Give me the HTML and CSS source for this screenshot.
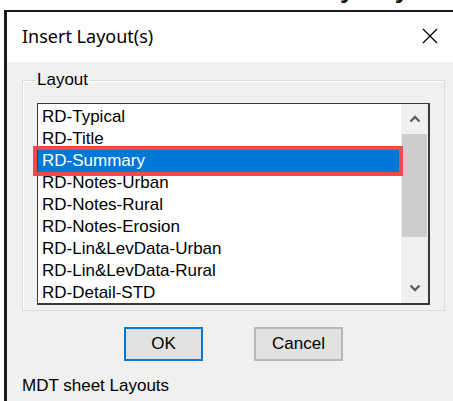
FILE: index.html
```html
<!DOCTYPE html>
<html lang="en">
<head>
<meta charset="utf-8">
<title>Insert Layout(s)</title>
<link rel="stylesheet" href="styles.css">
</head>
<body>
  <div class="backdrop"><span class="backdrop-text">by Day</span></div>

  <div class="dialog">
    <div class="titlebar">
      <span class="title">Insert Layout(s)</span>
      <svg class="close" width="16" height="16" viewBox="0 0 16 16" aria-hidden="true">
        <path d="M1 1 L15 15 M15 1 L1 15" stroke="#000" stroke-width="1.3" fill="none"/>
      </svg>
    </div>

    <div class="panel">
      <fieldset class="group">
        <legend class="group-label">Layout</legend>
        <div class="listwrap">
          <div class="listbox">
            <ul class="items">
              <li class="item">RD-Typical</li>
              <li class="item">RD-Title</li>
              <li class="item selected">RD-Summary</li>
              <li class="item">RD-Notes-Urban</li>
              <li class="item">RD-Notes-Rural</li>
              <li class="item">RD-Notes-Erosion</li>
              <li class="item">RD-Lin&amp;LevData-Urban</li>
              <li class="item">RD-Lin&amp;LevData-Rural</li>
              <li class="item">RD-Detail-STD</li>
            </ul>
            <div class="scrollbar">
              <div class="scroll-btn">
                <svg width="12" height="8" viewBox="0 0 12 8" aria-hidden="true">
                  <polyline points="1.5,6.5 6,2 10.5,6.5" stroke="#606060" stroke-width="2.4" fill="none"/>
                </svg>
              </div>
              <div class="scroll-thumb"></div>
              <div class="scroll-track"></div>
              <div class="scroll-btn">
                <svg width="12" height="8" viewBox="0 0 12 8" aria-hidden="true">
                  <polyline points="1.5,1.5 6,6 10.5,1.5" stroke="#606060" stroke-width="2.4" fill="none"/>
                </svg>
              </div>
            </div>
          </div>
          <div class="mark"></div>
        </div>
      </fieldset>

      <div class="actions">
        <button class="btn btn-default" type="button">OK</button>
        <button class="btn" type="button">Cancel</button>
      </div>

      <p class="status">MDT sheet Layouts</p>
    </div>
  </div>
</body>
</html>
```

FILE: styles.css
```css
html, body {
  margin: 0;
  padding: 0;
  background: #fff;
  overflow: hidden;
  width: 453px;
  height: 401px;
}

/* heading of the document behind the dialog, only its descenders show */
.backdrop {
  height: 10px;
  overflow: hidden;
  padding-left: 324px;
}
.backdrop-text {
  display: block;
  margin-top: -24px;
  font: bold 26px/26px "Liberation Sans", Arial, sans-serif;
  color: #111;
  white-space: nowrap;
}

.dialog {
  margin-left: 4px;
  width: 449px;
  box-sizing: border-box;
  border-left: 3px solid #1c1c1c;
  border-top: 2px solid #1c1c1c;
  font-family: "Liberation Sans", Arial, sans-serif;
}

.titlebar {
  height: 50px;
  background: #fff;
  display: flex;
  align-items: center;
  padding-left: 15px;
}
.title {
  font: 18px/20px "Noto Sans", "Open Sans", sans-serif;
  color: #000;
  flex: 1;
  margin-top: -2px;
}
.close {
  margin-right: 15px;
  margin-top: -2px;
}

.panel {
  background: #f0f0f0;
  padding-top: 8px;
  height: 339px;
  box-sizing: border-box;
}

.group {
  margin: 0 0 0 15px;
  width: 423px;
  box-sizing: border-box;
  border: 1px solid #dcdcdc;
  box-shadow: inset 1px 1px 0 #fff;
  padding: 13px 12px 5px 12px;
}
.group-label {
  padding: 0 2px;
  font-size: 17px;
  line-height: 20px;
  color: #000;
}

.listwrap {
  position: relative;
  margin-left: 2px;
  width: 393px;
  height: 202px;
}
.listbox {
  box-sizing: border-box;
  width: 393px;
  height: 202px;
  background: #fff;
  border-style: solid;
  border-color: #3a3a3a;
  border-width: 1px 2px 2px 1px;
  display: flex;
  overflow: hidden;
}
.items {
  list-style: none;
  margin: 0;
  padding: 2px 0 0 0;
  flex: 1;
}
.item {
  font-size: 17px;
  line-height: 22px;
  height: 22px;
  padding-left: 4px;
  color: #000;
  white-space: nowrap;
}
.item.selected {
  background: #0078d7;
  color: #fff;
}

.scrollbar {
  width: 27px;
  background: #f0f0f0;
  display: flex;
  flex-direction: column;
}
.scroll-btn {
  height: 30px;
  display: flex;
  align-items: center;
  justify-content: center;
}
.scroll-thumb {
  height: 103px;
  margin: 0 1px;
  background: #cdcdcd;
}
.scroll-track {
  flex: 1;
}

/* red highlight frame around the selected entry */
.mark {
  position: absolute;
  left: -4px;
  top: 43px;
  width: 370px;
  height: 30px;
  box-sizing: border-box;
  border: 4px solid #ef4a4f;
}

.actions {
  display: flex;
  gap: 51px;
  padding-left: 117px;
  margin-top: 16px;
}
.btn {
  box-sizing: border-box;
  height: 34px;
  width: 89px;
  margin: 0;
  padding: 0;
  background: #e1e1e1;
  border: 2px solid #b8b8b8;
  font: 17px "Liberation Sans", Arial, sans-serif;
  color: #000;
}
.btn-default {
  width: 79px;
  border-color: #0078d7;
}

.status {
  margin: 15px 0 0 15px;
  font-size: 17px;
  line-height: 20px;
  color: #000;
}
```
